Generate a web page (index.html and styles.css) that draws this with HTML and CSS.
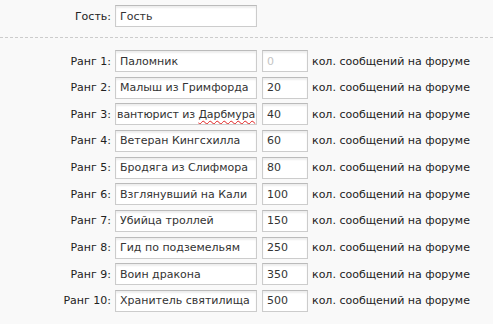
FILE: index.html
```html
<!DOCTYPE html>
<html lang="ru">
<head>
<meta charset="UTF-8" />
<title>Ранги</title>
<link rel="stylesheet" href="styles.css">
</head>
<body>
<div class="ranks-form">
  <div class="row guest">
    <label class="label">Гость:</label>
    <input class="field name" type="text" value="Гость">
  </div>

  <div class="sep"></div>

  <div class="rows">
    <div class="row">
      <label class="label">Ранг 1:</label>
      <input class="field name" type="text" value="Паломник">
      <input class="field num" type="text" placeholder="0">
      <span class="hint">кол. сообщений на форуме</span>
    </div>
    <div class="row">
      <label class="label">Ранг 2:</label>
      <input class="field name" type="text" value="Малыш из Гримфорда">
      <input class="field num" type="text" value="20">
      <span class="hint">кол. сообщений на форуме</span>
    </div>
    <div class="row">
      <label class="label">Ранг 3:</label>
      <div class="field name scrolled"><span class="val">вантюрист из <span class="typo">Дарбмура</span></span></div>
      <input class="field num" type="text" value="40">
      <span class="hint">кол. сообщений на форуме</span>
    </div>
    <div class="row">
      <label class="label">Ранг 4:</label>
      <input class="field name" type="text" value="Ветеран Кингсхилла">
      <input class="field num" type="text" value="60">
      <span class="hint">кол. сообщений на форуме</span>
    </div>
    <div class="row">
      <label class="label">Ранг 5:</label>
      <input class="field name" type="text" value="Бродяга из Слифмора">
      <input class="field num" type="text" value="80">
      <span class="hint">кол. сообщений на форуме</span>
    </div>
    <div class="row">
      <label class="label">Ранг 6:</label>
      <input class="field name" type="text" value="Взглянувший на Кали">
      <input class="field num" type="text" value="100">
      <span class="hint">кол. сообщений на форуме</span>
    </div>
    <div class="row">
      <label class="label">Ранг 7:</label>
      <input class="field name" type="text" value="Убийца троллей">
      <input class="field num" type="text" value="150">
      <span class="hint">кол. сообщений на форуме</span>
    </div>
    <div class="row">
      <label class="label">Ранг 8:</label>
      <input class="field name" type="text" value="Гид по подземельям">
      <input class="field num" type="text" value="250">
      <span class="hint">кол. сообщений на форуме</span>
    </div>
    <div class="row">
      <label class="label">Ранг 9:</label>
      <input class="field name" type="text" value="Воин дракона">
      <input class="field num" type="text" value="350">
      <span class="hint">кол. сообщений на форуме</span>
    </div>
    <div class="row">
      <label class="label">Ранг 10:</label>
      <input class="field name" type="text" value="Хранитель святилища">
      <input class="field num" type="text" value="500">
      <span class="hint">кол. сообщений на форуме</span>
    </div>
  </div>
</div>
</body>
</html>
```

FILE: styles.css
```css
* {
  margin: 0; padding: 0; box-sizing: border-box;
}
body {
  background: #f9f9f9;
  font-family: 'DejaVu Sans', Tahoma, Verdana, sans-serif;
  font-size: 11px;
  color: #222;
}
.ranks-form {
  padding-top: 5px;
}
.row {
  display: flex;
  align-items: center;
  gap: 4px;
  height: 22px;
}
.label {
  width: 111px;
  text-align: right;
  white-space: nowrap;
}
.sep {
  margin: 10px 0 12px;
  border-top: 1px dashed #ccc;
}
.rows {
  display: flex;
  flex-direction: column;
  gap: 4.67px;
}
.field {
  height: 22px;
  border: 1px solid #ccc;
  border-top-color: #bbb;
  background: #fff;
  box-shadow: inset 0 2px 2px rgba(0,0,0,0.07);
  font: inherit;
  color: #333;
  padding: 0 4px;
  outline: none;
}
.field.name {
  width: 142px;
}
.field.num {
  width: 46px;
  margin-left: 1px;
}
.field::placeholder {
  color: #c4c4c4;
}
.scrolled {
  display: flex;
  align-items: center;
  padding: 0 0 0 1px;
  overflow: hidden;
  white-space: nowrap;
  letter-spacing: -0.1px;
}
.typo {
  text-decoration: underline wavy #e02020;
  text-decoration-thickness: 1px;
  text-underline-offset: 2px;
}
.hint {
  white-space: nowrap;
}
```
